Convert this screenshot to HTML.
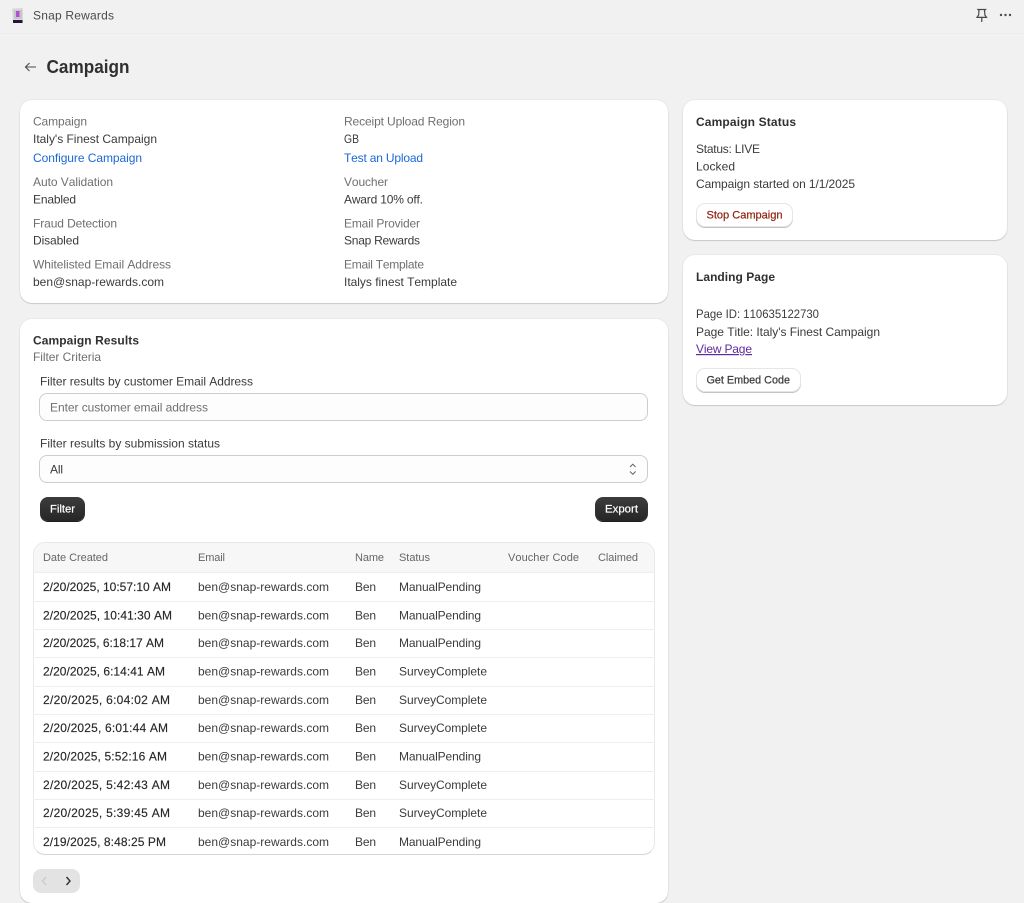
<!DOCTYPE html>
<html lang="en"><head><meta charset="utf-8"><title>Campaign</title>
<style>
html,body{margin:0;padding:0;width:1024px;height:902px;overflow:hidden;background:#f1f1f1}
.b{position:absolute;box-sizing:border-box}
.card{background:#fff;border-radius:12px;box-shadow:0 1px 1px rgba(0,0,0,.14),0 0 0 1px rgba(0,0,0,.035)}
.btn{background:#fff;border-radius:8px;box-shadow:0 0 0 1px #e6e6e6,0 1px 0 1px #c4c4c4}
.dark{background:linear-gradient(#3c3c3c,#262626);border-radius:8px;box-shadow:0 1px 0 #1f1f1f}
.field{background:#fdfdfd;border:1px solid #cdcdcd;border-radius:8px}
.line{left:33px;width:622px;height:1px;background:#eeeeee}
svg{position:absolute;left:0;top:0;filter:blur(.3px)}
text{font-family:"Liberation Sans",Arial,sans-serif;font-size:12px;fill:#3b3b3b;font-kerning:none}
.m{fill:#6f6f6f}.t{font-weight:700;fill:#303030}.l{fill:#1a68d8}.h{font-size:11px;fill:#666}.g{fill:#4a4a4a}
.d{fill:#262626;stroke:#303030;stroke-width:.15px}
.bt{font-size:11px;stroke-width:.2px}
</style></head><body>
<div class="b" style="left:0;top:0;width:1024px;height:34px;border-bottom:1px solid #ebebeb"></div>
<div class="b card" style="left:20px;top:100px;width:648px;height:203px"></div>
<div class="b card" style="left:20px;top:319px;width:648px;height:584px"></div>
<div class="b card" style="left:683px;top:100px;width:324px;height:140px"></div>
<div class="b card" style="left:683px;top:255px;width:324px;height:150px"></div>
<div class="b btn" style="left:697px;top:204px;width:95px;height:22px"></div>
<div class="b btn" style="left:697px;top:369px;width:103px;height:22px"></div>
<div class="b field" style="left:39px;top:393px;width:609px;height:28px"></div>
<div class="b field" style="left:39px;top:455px;width:609px;height:28px"></div>
<div class="b dark" style="left:40px;top:497px;width:45px;height:24px"></div>
<div class="b dark" style="left:595px;top:497px;width:53px;height:24px"></div>
<div class="b" style="left:33px;top:542px;width:622px;height:313px;border:1px solid #e8e8e8;border-bottom:1px solid #d4d4d4;border-radius:12px;overflow:hidden"><div style="height:30px;background:#f7f7f7"></div></div>
<div class="b line" style="top:572px"></div><div class="b line" style="top:601px"></div><div class="b line" style="top:629px"></div><div class="b line" style="top:657px"></div><div class="b line" style="top:686px"></div><div class="b line" style="top:714px"></div><div class="b line" style="top:742px"></div><div class="b line" style="top:771px"></div><div class="b line" style="top:799px"></div><div class="b line" style="top:827px"></div>
<div class="b" style="left:33px;top:869px;width:47px;height:24px;background:#e3e3e3;border-radius:8px"></div>
<svg width="1024" height="902" viewBox="0 0 1024 902">
<!-- logo -->
<path d="M12 8.500l10-.5 1 1v14h-10z" fill="#dcd8da"/><rect x="14" y="10" width="8" height="9" fill="#c9c3ca"/><rect x="16" y="11" width="3.500" height="6" fill="#b24fd0"/><rect x="13" y="20" width="9.500" height="3" fill="#26143a"/>
<!-- pin -->
<path d="M978 9.500h7.500l-1 1 .4 4.500 1.600 2.400h-9.500l1.600-2.400.4-4.500zM981.750 17.500v4.500" fill="none" stroke="#4a4a4a" stroke-width="1.200"/>
<circle cx="1001" cy="15" r="1.200" fill="#4a4a4a"/><circle cx="1005.500" cy="15" r="1.200" fill="#4a4a4a"/><circle cx="1010" cy="15" r="1.200" fill="#4a4a4a"/>
<!-- back -->
<path d="M36 67h-10.500M29.500 63l-4 4 4 4" fill="none" stroke="#4a4a4a" stroke-width="1.100"/>
<!-- select chevrons -->
<path d="M630 467l2.800-2.800 2.800 2.800M630 471.500l2.800 2.800 2.800-2.800" fill="none" stroke="#616161" stroke-width="1"/>
<!-- pagination chevrons -->
<path d="M46 877l-3.500 4 3.500 4" fill="none" stroke="#c9c9c9" stroke-width="1.300"/><path d="M66.500 877l3.500 4-3.500 4" fill="none" stroke="#303030" stroke-width="1.400"/>

<text x="33" y="19.500" textLength="81" class="g">Snap Rewards</text>
<text x="46.500" y="73" textLength="83" lengthAdjust="spacingAndGlyphs" class="t" style="font-size:18px">Campaign</text>

<text x="33" y="125.500" textLength="54" class="m">Campaign</text>
<text x="33" y="143" textLength="124">Italy's Finest Campaign</text>
<text x="33" y="162" textLength="109" class="l">Configure Campaign</text>
<text x="33" y="186" textLength="80" class="m">Auto Validation</text>
<text x="33" y="203.500" textLength="43">Enabled</text>
<text x="33" y="227.500" textLength="84" class="m">Fraud Detection</text>
<text x="33" y="244.500" textLength="46">Disabled</text>
<text x="33" y="268.500" textLength="138" class="m">Whitelisted Email Address</text>
<text x="33" y="286" textLength="131">ben@snap-rewards.com</text>

<text x="344" y="125.500" textLength="121" class="m">Receipt Upload Region</text>
<text x="344" y="143" textLength="15" lengthAdjust="spacingAndGlyphs">GB</text>
<text x="344" y="162" textLength="79" class="l">Test an Upload</text>
<text x="344" y="186" textLength="44" class="m">Voucher</text>
<text x="344" y="203.500" textLength="79">Award 10% off.</text>
<text x="344" y="227.500" textLength="76" class="m">Email Provider</text>
<text x="344" y="244.500" textLength="76">Snap Rewards</text>
<text x="344" y="268.500" textLength="80" class="m">Email Template</text>
<text x="344" y="286" textLength="113">Italys finest Template</text>

<text x="696" y="126" textLength="100" class="t">Campaign Status</text>
<text x="696" y="153" textLength="64">Status: LIVE</text>
<text x="696" y="170.500" textLength="39">Locked</text>
<text x="696" y="188" textLength="159">Campaign started on 1/1/2025</text>
<text x="706.500" y="218.500" textLength="76" lengthAdjust="spacingAndGlyphs" class="bt" style="fill:#8e1f0b;stroke:#8e1f0b">Stop Campaign</text>
<text x="696" y="281" textLength="79" class="t">Landing Page</text>
<text x="696" y="318" textLength="123" lengthAdjust="spacingAndGlyphs">Page ID: 110635122730</text>
<text x="696" y="336" textLength="184">Page Title: Italy's Finest Campaign</text>
<text x="696" y="353" textLength="56" style="fill:#5e2a9e;text-decoration:underline">View Page</text>
<text x="706.500" y="383.500" textLength="83.500" lengthAdjust="spacingAndGlyphs" class="bt" style="stroke:#303030">Get Embed Code</text>

<text x="33" y="344.500" textLength="106" class="t">Campaign Results</text>
<text x="33" y="361" textLength="68" class="m">Filter Criteria</text>
<text x="40" y="385.500" textLength="213">Filter results by customer Email Address</text>
<text x="50" y="411.500" textLength="158" class="m">Enter customer email address</text>
<text x="40" y="447.500" textLength="180">Filter results by submission status</text>
<text x="50" y="473.500" textLength="13">All</text>
<text x="50" y="512.500" textLength="25" lengthAdjust="spacingAndGlyphs" class="bt" style="fill:#fff;stroke:#fff">Filter</text>
<text x="605" y="512.500" textLength="33" lengthAdjust="spacingAndGlyphs" class="bt" style="fill:#fff;stroke:#fff">Export</text>

<text x="43" y="561" textLength="65" class="h">Date Created</text>
<text x="198" y="561" textLength="27" class="h">Email</text>
<text x="355" y="561" textLength="29" class="h">Name</text>
<text x="399" y="561" textLength="31" class="h">Status</text>
<text x="508" y="561" textLength="71" class="h">Voucher Code</text>
<text x="598" y="561" textLength="40" class="h">Claimed</text>

<text x="43" y="591" textLength="128" class="d">2/20/2025, 10:57:10 AM</text><text x="198" y="591" textLength="131">ben@snap-rewards.com</text><text x="355" y="591" textLength="21">Ben</text><text x="399" y="591" textLength="82">ManualPending</text>
<text x="43" y="619.500" textLength="129" class="d">2/20/2025, 10:41:30 AM</text><text x="198" y="619.500" textLength="131">ben@snap-rewards.com</text><text x="355" y="619.500" textLength="21">Ben</text><text x="399" y="619.500" textLength="82">ManualPending</text>
<text x="43" y="647" textLength="121" class="d">2/20/2025, 6:18:17 AM</text><text x="198" y="647" textLength="131">ben@snap-rewards.com</text><text x="355" y="647" textLength="21">Ben</text><text x="399" y="647" textLength="82">ManualPending</text>
<text x="43" y="675.500" textLength="122" class="d">2/20/2025, 6:14:41 AM</text><text x="198" y="675.500" textLength="131">ben@snap-rewards.com</text><text x="355" y="675.500" textLength="21">Ben</text><text x="399" y="675.500" textLength="88">SurveyComplete</text>
<text x="43" y="704" textLength="127" class="d">2/20/2025, 6:04:02 AM</text><text x="198" y="704" textLength="131">ben@snap-rewards.com</text><text x="355" y="704" textLength="21">Ben</text><text x="399" y="704" textLength="88">SurveyComplete</text>
<text x="43" y="732" textLength="125" class="d">2/20/2025, 6:01:44 AM</text><text x="198" y="732" textLength="131">ben@snap-rewards.com</text><text x="355" y="732" textLength="21">Ben</text><text x="399" y="732" textLength="88">SurveyComplete</text>
<text x="43" y="760.500" textLength="124" class="d">2/20/2025, 5:52:16 AM</text><text x="198" y="760.500" textLength="131">ben@snap-rewards.com</text><text x="355" y="760.500" textLength="21">Ben</text><text x="399" y="760.500" textLength="82">ManualPending</text>
<text x="43" y="789" textLength="127" class="d">2/20/2025, 5:42:43 AM</text><text x="198" y="789" textLength="131">ben@snap-rewards.com</text><text x="355" y="789" textLength="21">Ben</text><text x="399" y="789" textLength="88">SurveyComplete</text>
<text x="43" y="817" textLength="127" class="d">2/20/2025, 5:39:45 AM</text><text x="198" y="817" textLength="131">ben@snap-rewards.com</text><text x="355" y="817" textLength="21">Ben</text><text x="399" y="817" textLength="88">SurveyComplete</text>
<text x="43" y="846" textLength="123" class="d">2/19/2025, 8:48:25 PM</text><text x="198" y="846" textLength="131">ben@snap-rewards.com</text><text x="355" y="846" textLength="21">Ben</text><text x="399" y="846" textLength="82">ManualPending</text>
</svg>
</body></html>
